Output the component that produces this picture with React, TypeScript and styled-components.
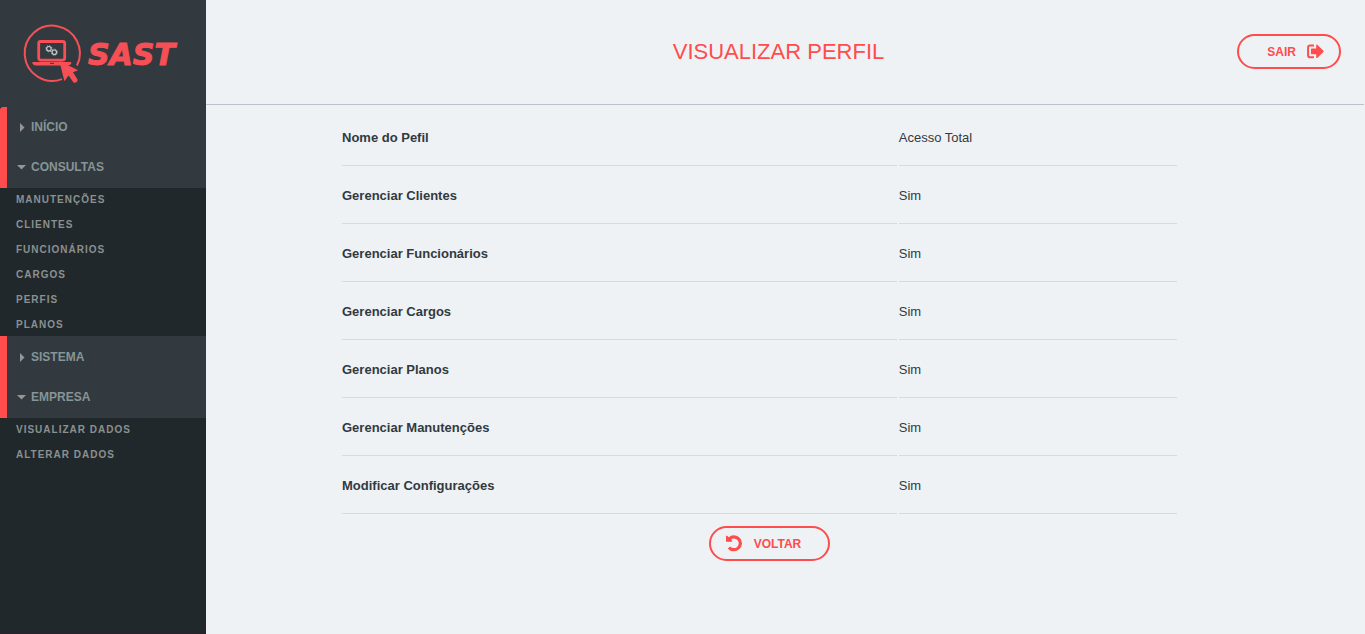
import React from "react";
import styled, { createGlobalStyle } from "styled-components";

const red = "#ff4c4c";

const GlobalStyle = createGlobalStyle`
  *, *::before, *::after { box-sizing: border-box; }
  body {
    margin: 0;
    background: #eef2f5;
    color: #32393f;
    font-family: "Liberation Sans", Arial, sans-serif;
    font-size: 13px;
  }
`;

const Page = styled.div`
  display: flex;
  min-height: 100vh;
`;

const Sidebar = styled.aside`
  flex: 0 0 206px;
  background: #21282b;
  border-bottom: 1px solid #2a1f2b;
`;

const Brand = styled.a`
  display: block;
  height: 107px;
  background: #32393f;
  svg { display: block; }
`;

const WordMark = styled.text`
  font-family: "DejaVu Sans", sans-serif;
  font-size: 30px;
  font-weight: 700;
  font-style: italic;
`;

const MenuGroup = styled.div<{ $first?: boolean }>`
  padding: ${(p) => (p.$first ? "0 0 1px" : "1px 0")};
  background: #32393f;
  border-left: 7px solid ${red};
  border-top-left-radius: ${(p) => (p.$first ? "3px" : "0")};
`;

const MenuButton = styled.button`
  display: flex;
  align-items: center;
  gap: 5px;
  width: 100%;
  height: 40px;
  padding: 0 0 0 10px;
  border: 0;
  background: none;
  color: #869596;
  font: 700 12px/16px "Liberation Sans", Arial, sans-serif;
  cursor: pointer;
`;

const Caret = styled.svg`
  width: 9px;
  height: 9px;
  fill: #999594;
`;

const SubMenu = styled.ul`
  display: flex;
  flex-direction: column;
  gap: 2px;
  margin: 0;
  padding: 0 16px;
  list-style: none;
`;

const SubLink = styled.a`
  display: block;
  color: #8b9090;
  font-size: 10px;
  font-weight: 700;
  line-height: 23px;
  letter-spacing: 1px;
  text-decoration: none;
`;

const Main = styled.main`
  flex: 1;
  min-width: 0;
`;

const Header = styled.header`
  display: grid;
  grid-template-columns: 1fr auto 1fr;
  align-items: center;
  height: 105px;
  margin-right: 1px;
  padding: 0 23px 1px 10px;
  border-bottom: 1px solid #bac3cc;
`;

const Title = styled.h1`
  grid-column: 2;
  margin: 0;
  color: ${red};
  font-size: 22px;
  font-weight: 400;
  line-height: 26px;
`;

const PillButton = styled.button<{ $iconFirst?: boolean }>`
  display: inline-flex;
  align-items: center;
  justify-self: end;
  gap: ${(p) => (p.$iconFirst ? "12px" : "11px")};
  height: 35px;
  padding: ${(p) => (p.$iconFirst ? "0 27px 0 14px" : "0 15px 0 28px")};
  border: 2px solid ${red};
  border-radius: 18px;
  background: transparent;
  color: ${red};
  font: 700 12px/16px "Liberation Sans", Arial, sans-serif;
  cursor: pointer;
  svg { display: block; }
`;

const Content = styled.section`
  padding: 3px 186px 24px 134px;
`;

const ProfileTable = styled.table`
  width: 100%;
  table-layout: fixed;
  border-collapse: separate;
  border-spacing: 2px;
  th, td {
    height: 56px;
    padding: 0;
    border-bottom: 1px solid #d6dbdf;
    text-align: left;
    line-height: 16px;
  }
  th { width: 66.6%; }
`;

const Actions = styled.div`
  display: flex;
  justify-content: center;
  padding: 10px 0 0 20px;
`;

const rows = [
  ["Nome do Pefil", "Acesso Total"],
  ["Gerenciar Clientes", "Sim"],
  ["Gerenciar Funcionários", "Sim"],
  ["Gerenciar Cargos", "Sim"],
  ["Gerenciar Planos", "Sim"],
  ["Gerenciar Manutenções", "Sim"],
  ["Modificar Configurações", "Sim"],
];

function Logo() {
  return (
    <svg width="206" height="107" viewBox="0 0 206 107" role="img" aria-label="SAST">
      <g fill="none" stroke="#f65056">
        <path d="M77 65.5A27.6 27.6 0 1 0 62 79.1" strokeWidth="2" />
        <rect x="38.7" y="41.5" width="26" height="18.6" rx="2" strokeWidth="2.8" />
      </g>
      <path d="M32.5 62H71.2V63.2Q70.5 65.5 68 65.5H36Q33.2 65.5 32.5 63.2Z" fill="#f65056" />
      <path d="M50 62.8H54V63.8H50Z" fill="#32393f" />
      <g fill="none" stroke="#c3cacd">
        <circle cx="48.9" cy="48.7" r="2.2" strokeWidth="1.2" />
        <circle cx="48.9" cy="48.7" r="3.1" strokeWidth="0.8" strokeDasharray="1.2 1.23" />
        <circle cx="54.3" cy="52.2" r="2.2" strokeWidth="1.2" />
        <circle cx="54.3" cy="52.2" r="3.1" strokeWidth="0.8" strokeDasharray="1.2 1.23" />
      </g>
      <path
        d="M59.4 61L78.2 70.3L73 72.3L77.4 79.2Q78 81 76.6 82.1Q75 83.3 73.3 82.2L68.6 75.6L64.4 81.3Z"
        fill="#f65056"
      />
      <WordMark x="88" y="65" fill="#f65056" stroke="#f65056" strokeWidth="1">SAST</WordMark>
    </svg>
  );
}

function MenuItem({ label, open }: { label: string; open?: boolean }) {
  return (
    <MenuButton type="button" aria-expanded={!!open}>
      <Caret viewBox="0 0 9 9" aria-hidden="true">
        <path d={open ? "M0 2H9L4.5 6.5Z" : "M3 0V9L7.5 4.5Z"} />
      </Caret>
      {label}
    </MenuButton>
  );
}

function SubItems({ items }: { items: string[] }) {
  return (
    <SubMenu>
      {items.map((item) => (
        <li key={item}>
          <SubLink href="#">{item}</SubLink>
        </li>
      ))}
    </SubMenu>
  );
}

function ExitIcon() {
  return (
    <svg width="17" height="15" viewBox="0 0 17 15" aria-hidden="true">
      <path d="M7 1.5H3Q1.1 1.5 1.1 3.3V11.4Q1.1 13.2 3 13.2H7" fill="none" stroke={red} strokeWidth="2" />
      <path d="M4.6 4.4H9.2V.9Q9.6 .2 10.3 .7L16.4 6.7Q17 7.3 16.4 7.9L10.3 13.9Q9.6 14.4 9.2 13.7V10.2H4.6Q4 10.2 4 9.6V5Q4 4.4 4.6 4.4Z" fill={red} />
    </svg>
  );
}

function BackIcon() {
  return (
    <svg width="17" height="17" viewBox="0 0 17 17" aria-hidden="true">
      <path d="M4.4 3.8A6.4 6.4 0 1 1 4 12.4" fill="none" stroke={red} strokeWidth="3.2" />
      <path d="M1 .5L2.8 1.2L7.2 5.8Q7.6 6.8 6.6 6.8H1.6Q1 6.8 1 6.2Z" fill={red} />
    </svg>
  );
}

export default function App() {
  return (
    <>
      <GlobalStyle />
      <Page>
        <Sidebar>
          <Brand href="#">
            <Logo />
          </Brand>
          <nav>
            <MenuGroup $first>
              <MenuItem label="INÍCIO" />
              <MenuItem label="CONSULTAS" open />
            </MenuGroup>
            <SubItems items={["MANUTENÇÕES", "CLIENTES", "FUNCIONÁRIOS", "CARGOS", "PERFIS", "PLANOS"]} />
            <MenuGroup>
              <MenuItem label="SISTEMA" />
              <MenuItem label="EMPRESA" open />
            </MenuGroup>
            <SubItems items={["VISUALIZAR DADOS", "ALTERAR DADOS"]} />
          </nav>
        </Sidebar>
        <Main>
          <Header>
            <Title>VISUALIZAR PERFIL</Title>
            <PillButton type="button">
              SAIR
              <ExitIcon />
            </PillButton>
          </Header>
          <Content>
            <ProfileTable>
              <tbody>
                {rows.map(([name, value]) => (
                  <tr key={name}>
                    <th scope="row">{name}</th>
                    <td>{value}</td>
                  </tr>
                ))}
              </tbody>
            </ProfileTable>
            <Actions>
              <PillButton type="button" $iconFirst>
                <BackIcon />
                VOLTAR
              </PillButton>
            </Actions>
          </Content>
        </Main>
      </Page>
    </>
  );
}
